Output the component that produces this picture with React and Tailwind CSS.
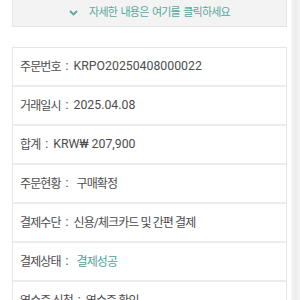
import React from "react";

const rows = [
  { label: "주문번호", value: "KRPO20250408000022", latin: true },
  { label: "거래일시", value: "2025.04.08", latin: true },
  { label: "합계", value: "KRW₩ 207,900", latin: true },
  { label: "주문현황", value: "구매확정", gap: true },
  { label: "결제수단", value: "신용/체크카드 및 간편 결제" },
  { label: "결제상태", value: "결제성공", gap: true, teal: true },
  { label: "영수증 신청", value: "영수증 확인" },
];

export default function App() {
  return (
    <div
      className="flex w-[300px] h-[300px] overflow-hidden bg-white"
      style={{ fontFamily: 'Roboto, "Noto Sans CJK KR", sans-serif' }}
    >
      <div className="w-[291px] shrink-0">
        <div className="mx-3 w-[275px] h-[28px] -mt-px bg-[#f3f3f3] border border-[#e4e4e4] flex items-center justify-center gap-[11px] text-[11px] tracking-[-0.8px] [word-spacing:1.5px] text-[#56a89f]">
          <svg width="9" height="6" viewBox="0 0 9 6">
            <path d="M1 1 L4.5 4.5 L8 1" fill="none" stroke="#56a89f" strokeWidth="1.8" />
          </svg>
          <span>자세한 내용은 여기를 클릭하세요</span>
        </div>
        <div className="mx-3 mt-[20px] w-[275px] border border-[#e6e6e6] border-b-0">
          {rows.map((r, i) => (
            <div
              key={i}
              className="h-[39px] border-b-2 border-[#ececec] flex items-center pl-[7px] text-[12px] text-[#4d4d4d] whitespace-nowrap"
            >
              <span className="tracking-[-0.9px]">{r.label}</span>
              <span className="mx-[5px] text-[12.3px]">:</span>
              {r.gap && <span className="w-[3px]" />}
              <span
                className={
                  r.teal
                    ? "text-[#4fa39b] tracking-[-0.9px]"
                    : r.latin
                    ? "text-[12.3px]"
                    : "tracking-[-0.9px]"
                }
              >
                {r.value}
              </span>
            </div>
          ))}
        </div>
      </div>
      <div className="w-[9px] h-full bg-gradient-to-r from-[#f6f6f6] via-[#ececec] to-[#f4f4f4]" />
    </div>
  );
}
